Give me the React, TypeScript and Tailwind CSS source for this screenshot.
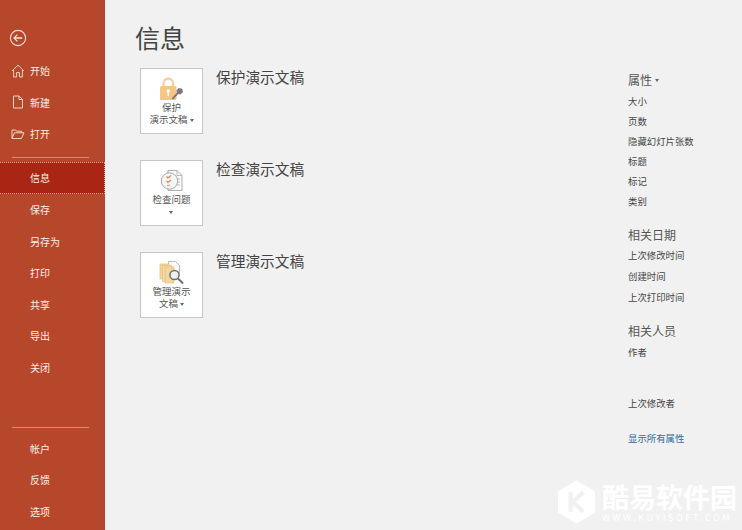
const cjk = "font-['Noto_Sans_CJK_SC','Noto_Sans',sans-serif]"

function BackIcon() {
  return (
    <svg width="18" height="18" viewBox="0 0 18 18" fill="none" stroke="#f6e3dc" strokeWidth="1.1">
      <circle cx="9" cy="9" r="7.6" />
      <path d="M13.2 9H5.2M8.4 5.6 5 9l3.4 3.4" strokeWidth="1.3" />
    </svg>
  )
}

function HomeIcon() {
  return (
    <svg width="14" height="14" viewBox="0 0 14 14" fill="none" stroke="#f3d4c9" strokeWidth="1">
      <path d="M1 7 7 1.2 13 7M2.6 5.8V13h3V8.6h2.8V13h3V5.8" />
    </svg>
  )
}

function NewIcon() {
  return (
    <svg width="14" height="14" viewBox="0 0 14 14" fill="none" stroke="#f3d4c9" strokeWidth="1">
      <path d="M2.5 1h5.6l3.4 3.4V13h-9zM8 1v3.5h3.5" />
    </svg>
  )
}

function OpenIcon() {
  return (
    <svg width="14" height="14" viewBox="0 0 14 14" fill="none" stroke="#f3d4c9" strokeWidth="1">
      <path d="M1 11.5V3h3.6l1 1.2h5v1.6M1 11.5h9.4L13 5.8H3.4z" />
    </svg>
  )
}

function LockIcon() {
  return (
    <svg width="26" height="24" viewBox="0 0 26 24">
      <path d="M4.5 10V6.5a4.8 4.8 0 0 1 9.6 0V10" fill="none" stroke="#f4cf97" strokeWidth="2.2" />
      <rect x="1" y="9" width="16.5" height="14" rx="1.5" fill="#f5c684" />
      <circle cx="9.2" cy="14" r="1.7" fill="#fff" />
      <rect x="8.5" y="14" width="1.4" height="5" fill="#fff" />
      <path d="M12.5 21.5 18 15.5l-.6-2 2.2-2.6 3.6.9.8 3.2-2.6 2.5-2.2-.4-4.6 5.2z" fill="#7a7a7a" />
    </svg>
  )
}

function InspectIcon() {
  return (
    <svg width="24" height="24" viewBox="0 0 24 24" fill="none">
      <path d="M8 1.5h9l5 5v15H8z" fill="#fafafa" stroke="#a6a6a6" strokeWidth="0.9" />
      <path d="M17 1.5v5h5M15 10h5M15 13h5M15 16h5" stroke="#b4b4b4" strokeWidth="0.9" />
      <circle cx="9.5" cy="12" r="8.2" fill="#f6f6f6" stroke="#a6a6a6" strokeWidth="1" />
      <path d="M6.5 7.5l1.5 1.5 3-2.5M6.5 12l1.5 1.5 3-2.5" stroke="#e07a55" strokeWidth="1.1" />
      <path d="M7 16.5h3" stroke="#b4b4b4" strokeWidth="1.4" />
    </svg>
  )
}

function ManageIcon() {
  return (
    <svg width="26" height="24" viewBox="0 0 26 24" fill="none">
      <path d="M9.5 0.5h7l4 4V12h-11z" fill="#fafafa" stroke="#a8a8a8" strokeWidth="0.8" />
      <rect x="1" y="3" width="9" height="15" fill="#f3d59f" stroke="#e8bc78" strokeWidth="0.7" />
      <rect x="3.5" y="4.5" width="9" height="16" fill="#f5dba9" stroke="#e8bc78" strokeWidth="0.7" />
      <rect x="6" y="6" width="9" height="16" fill="#f3d59f" stroke="#e8bc78" strokeWidth="0.7" />
      <circle cx="15.5" cy="14" r="4.6" fill="#eef1f2" stroke="#6e6e6e" strokeWidth="1.5" />
      <path d="m19 17.5 5 5" stroke="#6e6e6e" strokeWidth="2" />
    </svg>
  )
}

function Caret() {
  return <span className="inline-block h-0 w-0 border-x-[2.5px] border-t-[3px] border-x-transparent border-t-[#666] align-middle" />
}

function NavRow({ label, icon, active }: { label: string; icon?: JSX.Element; active?: boolean }) {
  return (
    <div
      className={`flex shrink-0 items-center text-[10px] text-[#fbeee9] ${
        active
          ? 'h-[32px] border-y border-r border-dotted border-[#d9a79a] bg-[#a82613]'
          : 'h-[31.6px]'
      }`}
    >
      <span className="flex w-[30px] justify-center pl-[6px]">{icon}</span>
      <span>{label}</span>
    </div>
  )
}

function ActionCard({ icon, lines, heading, below }: { icon: JSX.Element; lines: JSX.Element; heading: string; below: string }) {
  return (
    <div className={`flex h-[66px] items-start ${below}`}>
      <div className="ml-[4px] flex h-[66px] w-[63px] flex-col items-center border border-[#c6c6c6] bg-white pt-[7px] text-[9.5px] leading-[12px] text-[#555]">
        <div className="flex h-[25px] items-center">{icon}</div>
        <div className="text-center">{lines}</div>
      </div>
      <h2 className="ml-[13px] text-[14.7px] leading-[18px] text-[#444]">{heading}</h2>
    </div>
  )
}

function PropRow({ label, h = 'h-[20px]' }: { label: string; h?: string }) {
  return <div className={`flex items-center text-[9.4px] text-[#444] ${h}`}>{label}</div>
}

function PropHead({ label, caret }: { label: string; caret?: boolean }) {
  return (
    <div className="flex h-[18px] items-center gap-[3px] text-[12px] text-[#555]">
      {label}
      {caret && <Caret />}
    </div>
  )
}

export default function App() {
  return (
    <div className={`relative flex h-[530px] w-[742px] overflow-hidden bg-[#f1f1f1] ${cjk}`}>
      {/* Left backstage nav */}
      <aside className="flex h-full w-[105px] shrink-0 flex-col bg-[#b7472a] pt-[29px]">
        <div className="mb-[8px] shrink-0 pl-[9px]">
          <BackIcon />
        </div>
        <NavRow label="开始" icon={<HomeIcon />} />
        <NavRow label="新建" icon={<NewIcon />} />
        <NavRow label="打开" icon={<OpenIcon />} />
        <div className="mb-[4px] ml-[12px] mr-[16px] mt-[7px] h-px shrink-0 bg-[#dd8a72]" />
        <NavRow label="信息" active />
        <NavRow label="保存" />
        <NavRow label="另存为" />
        <NavRow label="打印" />
        <NavRow label="共享" />
        <NavRow label="导出" />
        <NavRow label="关闭" />
        <div className="mb-[4px] ml-[12px] mr-[16px] mt-[44px] h-px shrink-0 bg-[#dd8a72]" />
        <NavRow label="帐户" />
        <NavRow label="反馈" />
        <NavRow label="选项" />
      </aside>

      {/* Main column */}
      <main className="flex-1 pl-[31px] pt-[20px]">
        <h1 className="-ml-[1px] text-[25px] leading-[34px] text-[#444]">信息</h1>
        <ActionCard
          below="mt-[14px]"
          icon={<LockIcon />}
          heading="保护演示文稿"
          lines={
            <>
              保护
              <br />
              演示文稿 <Caret />
            </>
          }
        />
        <ActionCard
          below="mt-[26px]"
          icon={<InspectIcon />}
          heading="检查演示文稿"
          lines={
            <>
              检查问题
              <br />
              <Caret />
            </>
          }
        />
        <ActionCard
          below="mt-[26px]"
          icon={<ManageIcon />}
          heading="管理演示文稿"
          lines={
            <>
              管理演示
              <br />
              文稿 <Caret />
            </>
          }
        />
      </main>

      {/* Properties column */}
      <section className="w-[114px] shrink-0 pt-[71px]">
        <PropHead label="属性" caret />
        <div className="mt-[2px]">
          {['大小', '页数', '隐藏幻灯片张数', '标题', '标记', '类别'].map((p) => (
            <PropRow key={p} label={p} />
          ))}
        </div>
        <div className="mt-[15px]">
          <PropHead label="相关日期" />
        </div>
        <div className="mt-[1px]">
          {['上次修改时间', '创建时间', '上次打印时间'].map((p) => (
            <PropRow key={p} label={p} h="h-[21px]" />
          ))}
        </div>
        <div className="mt-[14px]">
          <PropHead label="相关人员" />
        </div>
        <div className="mt-[2px]">
          <PropRow label="作者" h="h-[21px]" />
        </div>
        <div className="mt-[30px]">
          <PropRow label="上次修改者" h="h-[21px]" />
        </div>
        <div className="mt-[14px] flex h-[20px] items-center text-[9.4px] text-[#2b6aa8]">显示所有属性</div>
      </section>

      {/* Watermark */}
      <div className="absolute left-[557px] top-[480px] flex items-center gap-[6px] whitespace-nowrap text-white">
        <svg width="39" height="44" viewBox="0 0 40 44">
          <path d="M20 1 38 11.5v21L20 43 2 32.5v-21z" fill="#fff" stroke="#fff" strokeLinejoin="round" strokeWidth="2" />
          <path d="M14 12v20M27 12 16 22l11 10" fill="none" stroke="#f1f1f1" strokeWidth="4.5" />
        </svg>
        <div className="flex flex-col">
          <span className="text-[27px] font-bold leading-[32px]">酷易软件园</span>
          <span className="text-[9px] leading-[10px] tracking-[2.6px]">WWW.KUYISOFT.COM</span>
        </div>
      </div>
    </div>
  )
}
